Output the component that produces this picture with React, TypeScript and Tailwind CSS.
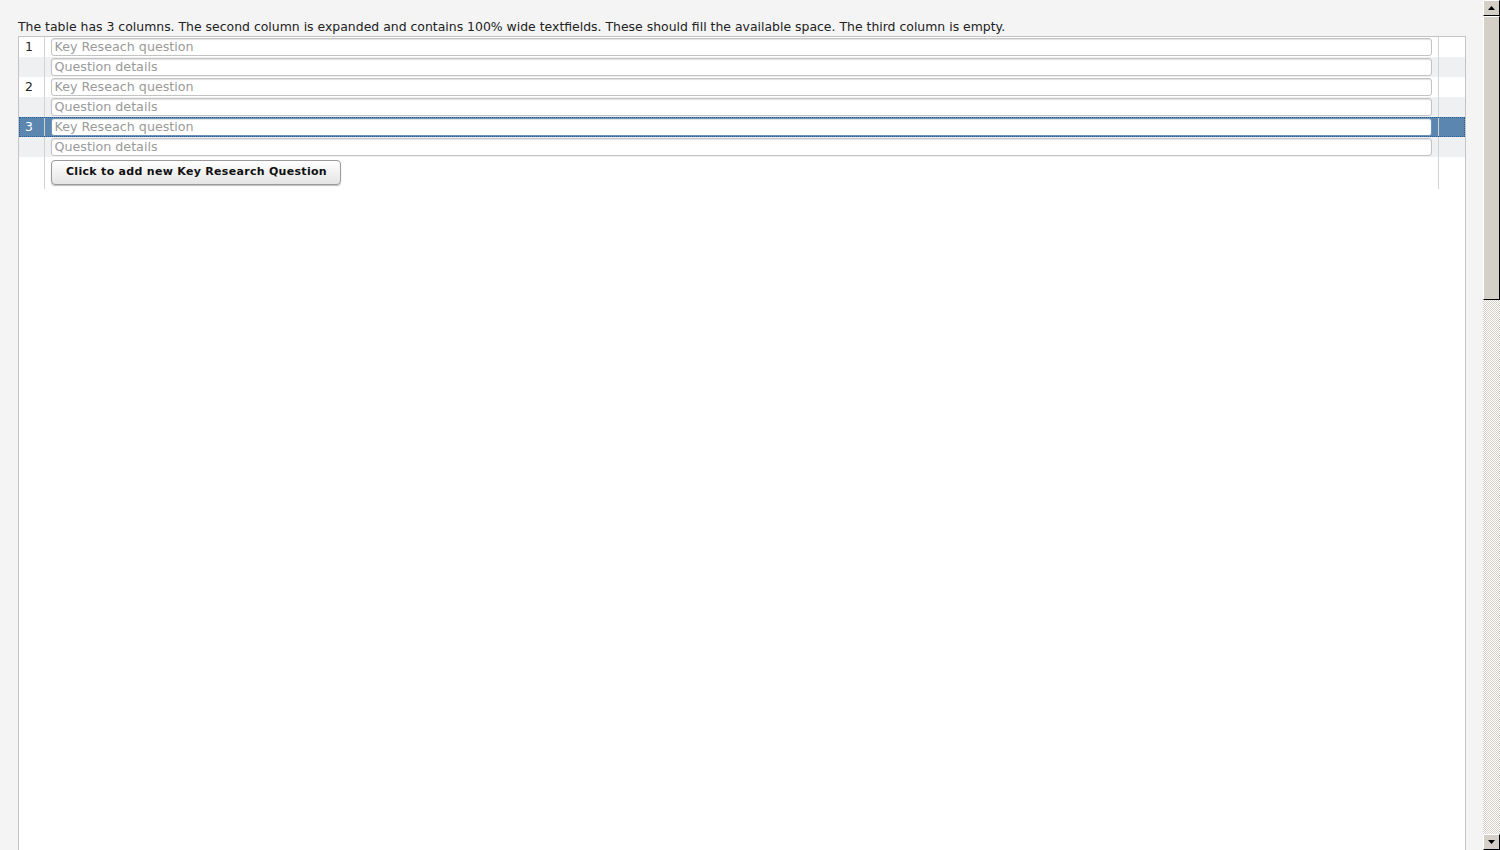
const rows = [
  { n: '1', selected: false },
  { n: '2', selected: false },
  { n: '3', selected: true },
]

function Field({ placeholder, selected }: { placeholder: string; selected?: boolean }) {
  return (
    <input
      readOnly
      placeholder={placeholder}
      className={
        'block h-[18px] w-full rounded-[3px] border bg-white px-[3px] pb-[2px] text-[12.7px] leading-[14px] text-gray-800 outline-none placeholder:text-[#9a9a9a] shadow-[inset_0_1px_1px_rgba(0,0,0,0.12)] ' +
        (selected ? 'border-[#6f92b8]' : 'border-[#c3c3c3]')
      }
    />
  )
}

function Scrollbar() {
  return (
    <div className="flex h-full w-[17px] shrink-0 flex-col bg-[#d4d0c8]">
      <div className="flex h-[16px] w-[17px] items-center justify-center border-t border-l border-white border-r border-b border-r-black border-b-black bg-[#d4d0c8]">
        <svg width="7" height="4" viewBox="0 0 7 4">
          <path d="M3.5 0L7 4H0z" fill="#000" />
        </svg>
      </div>
      <div className="h-[284px] w-[17px] border-t border-l border-white border-r border-b border-r-black border-b-black bg-[#d4d0c8]" />
      <div className="flex-1 bg-[repeating-conic-gradient(#d4d0c8_0_25%,#ffffff_0_50%)] bg-[length:2px_2px]" />
      <div className="flex h-[16px] w-[17px] items-center justify-center border-t border-l border-white border-r border-b border-r-black border-b-black bg-[#d4d0c8]">
        <svg width="7" height="4" viewBox="0 0 7 4">
          <path d="M0 0H7L3.5 4z" fill="#000" />
        </svg>
      </div>
    </div>
  )
}

export default function App() {
  return (
    <div className="flex h-[850px] w-full overflow-hidden bg-[#f4f4f4] font-['DejaVu_Sans',sans-serif] text-[12.45px] text-[#222]">
      <div className="flex min-w-0 flex-1 flex-col pl-[18px] pr-[17px] pt-[17px]">
        <p className="h-[19px] leading-[19px]">
          The table has 3 columns. The second column is expanded and contains 100% wide textfields. These should fill the available space. The third column is empty.
        </p>
        <div className="flex-1 border border-b-0 border-[#c4c4c4] bg-white">
          <table className="w-full border-collapse">
            <tbody>
              {rows.map((r) => (
                <>
                  <tr
                    key={r.n + 'a'}
                    className={
                      r.selected
                        ? 'h-[20px] bg-[#5a86b0] text-white outline outline-1 outline-dotted -outline-offset-1 outline-[#2a5d93]'
                        : 'h-[20px] bg-white'
                    }
                  >
                    <td className="w-[25px] border-r border-[#d2d2d2] pl-[6px] align-middle leading-[18px]">{r.n}</td>
                    <td className="px-[6px] py-px">
                      <Field placeholder="Key Reseach question" selected={r.selected} />
                    </td>
                    <td className="w-[27px] border-l border-[#d2d2d2]" />
                  </tr>
                  <tr key={r.n + 'b'} className="h-[20px] bg-[#eef0f2]">
                    <td className="w-[25px] border-r border-[#d2d2d2]" />
                    <td className="px-[6px] py-px">
                      <Field placeholder="Question details" />
                    </td>
                    <td className="w-[27px] border-l border-[#d2d2d2]" />
                  </tr>
                </>
              ))}
              <tr className="h-[32px]">
                <td className="w-[25px] border-r border-[#d2d2d2]" />
                <td className="px-[6px] pt-[3px] pb-[4px] align-top">
                  <button className="h-[25px] w-[290px] rounded-[4px] border border-[#9a9a9a] bg-gradient-to-b from-white to-[#e4e4e4] pl-[2px] text-[11px] font-bold tracking-[0.3px] text-[#111] shadow-[0_1px_1px_rgba(0,0,0,0.25)]">
                    Click to add new Key Research Question
                  </button>
                </td>
                <td className="w-[27px] border-l border-[#d2d2d2]" />
              </tr>
            </tbody>
          </table>
        </div>
      </div>
      <Scrollbar />
    </div>
  )
}
